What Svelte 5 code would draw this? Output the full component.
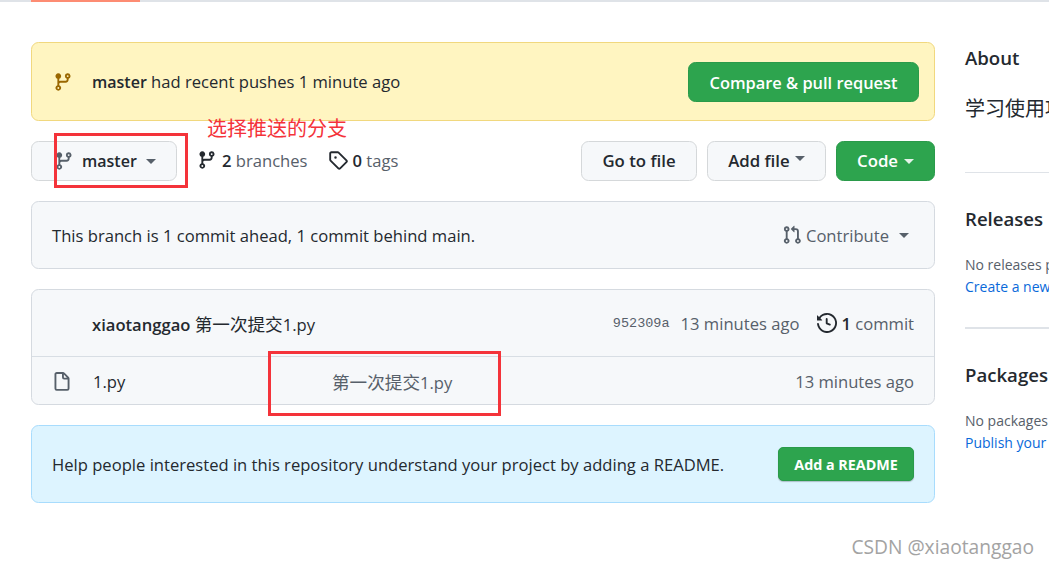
<script>
  const branchIcon = 'M11.75 2.5a.75.75 0 100 1.5.75.75 0 000-1.5zm-2.25.75a2.25 2.25 0 113 2.122V6A2.5 2.5 0 0110 8.5H6a1 1 0 00-1 1v1.128a2.251 2.251 0 11-1.5 0V5.372a2.25 2.25 0 111.5 0v1.836A2.492 2.492 0 016 7h4a1 1 0 001-1v-.628A2.25 2.25 0 019.5 3.25zM4.25 12a.75.75 0 100 1.5.75.75 0 000-1.5zM3.5 3.25a.75.75 0 111.5 0 .75.75 0 01-1.5 0z';
  const tagIcon = 'M2.5 7.775V2.75a.25.25 0 01.25-.25h5.025a.25.25 0 01.177.073l6.25 6.25a.25.25 0 010 .354l-5.025 5.025a.25.25 0 01-.354 0l-6.25-6.25a.25.25 0 01-.073-.177zm-1.5 0V2.75C1 1.784 1.784 1 2.75 1h5.025c.464 0 .91.184 1.238.513l6.25 6.25a1.75 1.75 0 010 2.474l-5.025 5.025a1.75 1.75 0 01-2.474 0l-6.25-6.25A1.75 1.75 0 011 7.775zM6 5a1 1 0 100 2 1 1 0 000-2z';
  const prIcon = 'M7.177 3.073L9.573.677A.25.25 0 0110 .854v4.792a.25.25 0 01-.427.177L7.177 3.427a.25.25 0 010-.354zM3.75 2.5a.75.75 0 100 1.5.75.75 0 000-1.5zm-2.25.75a2.25 2.25 0 113 2.122v5.256a2.251 2.251 0 11-1.5 0V5.372A2.25 2.25 0 011.5 3.25zM11 2.5h-1V4h1a1 1 0 011 1v5.628a2.251 2.251 0 101.5 0V5A2.5 2.5 0 0011 2.5zm1 10.25a.75.75 0 111.5 0 .75.75 0 01-1.5 0zM3.75 12a.75.75 0 100 1.5.75.75 0 000-1.5z';
  const historyIcon = 'M1.643 3.143L.427 1.927A.25.25 0 000 2.104V5.75c0 .138.112.25.25.25h3.646a.25.25 0 00.177-.427L2.715 4.215a6.5 6.5 0 11-1.18 4.458.75.75 0 10-1.493.154 8.001 8.001 0 101.6-5.684zM7.75 4a.75.75 0 01.75.75v2.992l2.028.812a.75.75 0 01-.557 1.392l-2.5-1A.75.75 0 017 8.25v-3.5A.75.75 0 017.75 4z';
  const fileIcon = 'M3.75 1.5a.25.25 0 00-.25.25v11.5c0 .138.112.25.25.25h8.5a.25.25 0 00.25-.25V6H9.75A1.75 1.75 0 018 4.25V1.5H3.75zm5.75.56v2.19c0 .138.112.25.25.25h2.19L9.5 2.06zM2 1.75C2 .784 2.784 0 3.75 0h5.086c.464 0 .909.184 1.237.513l3.414 3.414c.329.328.513.773.513 1.237v8.086A1.75 1.75 0 0112.25 15h-8.5A1.75 1.75 0 012 13.25V1.75z';
</script>

<div class="page">
  <div class="tabline"><span class="tab-active"></span></div>

  <div class="layout">
    <main class="main">
      <section class="banner">
        <div class="banner-text">
          <svg class="icon branch-yellow" viewBox="0 0 16 16"><path d={branchIcon} /></svg>
          <span><strong class="pushed">master</strong> had recent pushes 1 minute ago</span>
        </div>
        <button class="btn green compare">Compare &amp; pull request</button>
      </section>

      <section class="toolbar">
        <button class="btn branch-btn">
          <svg class="icon" viewBox="0 0 16 16"><path d={branchIcon} /></svg>
          <span class="branch-name">master</span>
          <i class="caret"></i>
        </button>
        <span class="meta">
          <svg class="icon dark" viewBox="0 0 16 16"><path d={branchIcon} /></svg>
          <span><strong>2</strong> branches</span>
        </span>
        <span class="meta">
          <svg class="icon dark" viewBox="0 0 16 16"><path fill-rule="evenodd" d={tagIcon} /></svg>
          <span><strong>0</strong> tags</span>
        </span>
        <span class="spacer"></span>
        <button class="btn goto">Go to file</button>
        <button class="btn addfile">Add file<i class="caret up"></i></button>
        <button class="btn green code">Code<i class="caret light"></i></button>
      </section>

      <section class="box ahead">
        <span>This branch is 1 commit ahead, 1 commit behind main.</span>
        <span class="contribute">
          <svg class="icon" viewBox="0 0 16 16"><path d={prIcon} /></svg>
          Contribute
          <i class="caret"></i>
        </span>
      </section>

      <section class="box files">
        <div class="commit-row">
          <span class="commit-msg"><strong>xiaotanggao</strong> <span class="cjk">第一次提交</span>1.py</span>
          <span class="spacer"></span>
          <code class="sha">952309a</code>
          <span class="muted">13 minutes ago</span>
          <span class="commits">
            <svg class="icon dark" viewBox="0 0 16 16"><path d={historyIcon} /></svg>
            <span><strong>1</strong> <span class="muted">commit</span></span>
          </span>
        </div>
        <div class="file-row">
          <svg class="icon file" viewBox="0 0 16 16"><path d={fileIcon} /></svg>
          <span class="file-name">1.py</span>
          <span class="muted file-msg"><span class="cjk">第一次提交</span>1.py</span>
          <span class="muted file-when">13 minutes ago</span>
        </div>
      </section>

      <section class="readme">
        <span>Help people interested in this repository understand your project by adding a README.</span>
        <button class="btn green add-readme">Add a README</button>
      </section>
    </main>

    <aside class="side">
      <h2 class="about">About</h2>
      <p class="desc">学习使用项目</p>
      <hr />
      <h2>Releases</h2>
      <p class="small muted">No releases published</p>
      <p class="small link">Create a new release</p>
      <hr />
      <h2>Packages</h2>
      <p class="small muted">No packages published</p>
      <p class="small link">Publish your first package</p>
    </aside>
  </div>

  <div class="mark mark-branch"></div>
  <div class="mark mark-msg"></div>
  <div class="note">选择推送的分支</div>
  <div class="watermark">CSDN @xiaotanggao</div>
</div>

<style>
  :global(body) {
    margin: 0;
    background: #fff;
    overflow: hidden;
  }

  .page {
    position: relative;
    width: 1049px;
    height: 568px;
    overflow: hidden;
    color: #24292f;
    font-family: "Open Sans", "Noto Sans CJK SC", sans-serif;
    font-size: 16.6px;
  }

  strong {
    font-weight: 600;
  }

  .cjk {
    font-size: 17.6px;
  }

  .tabline {
    height: 2px;
    background: #dfe3e8;
    padding-left: 31px;
  }

  .tab-active {
    display: block;
    width: 109px;
    height: 2px;
    background: #fd8c73;
  }

  .layout {
    display: flex;
    gap: 30px;
    padding: 40px 0 0 31px;
    width: 1200px;
  }

  .main {
    width: 904px;
    flex: none;
  }

  .icon {
    width: 20px;
    height: 20px;
    fill: #57606a;
    flex: none;
  }

  .icon.dark {
    fill: #24292f;
  }

  .branch-yellow {
    fill: #9a6700;
  }

  .btn {
    display: inline-flex;
    align-items: center;
    justify-content: center;
    height: 40px;
    box-sizing: border-box;
    border: 1px solid #d5d8da;
    border-radius: 7.5px;
    background: #f6f8fa;
    color: #24292f;
    font: 600 16.8px "Open Sans", sans-serif;
    padding: 0;
  }

  .btn.green {
    background: #2da44e;
    border-color: #2a9a4a;
    color: #fff;
  }

  .caret {
    display: inline-block;
    width: 0;
    height: 0;
    border: 5px solid transparent;
    border-top-color: #57606a;
    border-bottom: 0;
  }

  .caret.light {
    border-top-color: #e6f3ea;
    margin: 2px 0 0 6px;
  }

  .caret.up {
    margin: 0 0 4px 5px;
  }

  .banner {
    display: flex;
    align-items: center;
    justify-content: space-between;
    box-sizing: border-box;
    height: 79px;
    padding: 0 15px 0 21px;
    background: #fff5c1;
    border: 1px solid #f1d87e;
    border-radius: 7.5px;
  }

  .banner-text {
    display: flex;
    align-items: center;
    gap: 19px;
  }

  .pushed {
    font-size: 16px;
  }

  .compare {
    width: 231px;
    font-size: 16.4px;
    padding-top: 2px;
  }

  .toolbar {
    display: flex;
    align-items: center;
    margin-top: 20px;
    height: 40px;
  }

  .spacer {
    flex: 1;
  }

  .branch-btn {
    width: 146px;
    justify-content: flex-start;
    padding-left: 22px;
    font-size: 16px;
  }

  .branch-name {
    margin-left: 8px;
    margin-right: 9px;
  }

  .meta {
    display: inline-flex;
    align-items: center;
    gap: 5px;
    color: #57606a;
    margin-left: 20px;
    padding-bottom: 2px;
  }

  .meta strong {
    color: #24292f;
  }

  .goto {
    width: 116px;
    margin-right: 10px;
    padding-bottom: 2px;
  }

  .addfile {
    width: 119px;
    margin-right: 10px;
    padding-bottom: 2px;
  }

  .code {
    width: 99px;
    padding-bottom: 2px;
  }

  .box {
    border: 1px solid #d5dae0;
    border-radius: 7.5px;
    background: #f6f8fa;
    box-sizing: border-box;
  }

  .ahead {
    display: flex;
    align-items: center;
    justify-content: space-between;
    height: 68px;
    margin-top: 20px;
    padding: 0 25px 0 20px;
  }

  .contribute {
    display: inline-flex;
    align-items: center;
    gap: 4px;
    color: #57606a;
  }

  .contribute .caret {
    margin-left: 6px;
  }

  .files {
    height: 116px;
    margin-top: 20px;
  }

  .commit-row {
    display: flex;
    align-items: center;
    height: 66px;
    padding: 0 20px 0 60px;
    border-bottom: 1px solid #d8dee4;
  }

  .muted {
    color: #57606a;
  }

  .sha {
    font: 13.5px "Liberation Mono", "DejaVu Sans Mono", monospace;
    color: #57606a;
    margin-right: 11px;
  }

  .commits {
    display: inline-flex;
    align-items: center;
    gap: 4px;
    margin-left: 18px;
  }

  .file-row {
    display: flex;
    align-items: center;
    box-sizing: border-box;
    height: 47px;
    padding: 2px 20px 0;
  }

  .file-name {
    margin-left: 21px;
    width: 239px;
  }

  .file-when {
    margin-left: auto;
  }

  .readme {
    display: flex;
    align-items: center;
    justify-content: space-between;
    box-sizing: border-box;
    height: 78px;
    margin-top: 20px;
    padding: 0 20px;
    background: #ddf4ff;
    border: 1px solid #a8dcfd;
    border-radius: 7.5px;
  }

  .add-readme {
    width: 136px;
    height: 34px;
    font-size: 14.3px;
    font-weight: 700;
    border-radius: 5px;
    box-shadow: 0 1px 1px rgba(27, 31, 36, 0.25);
  }

  .side {
    width: 300px;
    flex: none;
  }

  .side h2 {
    margin: 0;
    font-size: 18.6px;
    font-weight: 600;
    line-height: 26px;
  }

  .about {
    margin-top: 3px !important;
  }

  .desc {
    margin: 25px 0 0;
    font-size: 20px;
    line-height: 26px;
    white-space: nowrap;
  }

  .side hr {
    border: 0;
    border-top: 2px solid #dfe3e8;
    margin: 0;
  }

  .side hr:nth-of-type(1) {
    margin: 50px 0 33px;
    border-top-width: 1px;
  }

  .side hr:nth-of-type(2) {
    margin: 29px 0 33px;
  }

  .small {
    margin: 0;
    font-size: 14px;
    line-height: 22px;
    white-space: nowrap;
  }

  .side h2 + .small {
    margin-top: 22px;
  }

  .link {
    color: #0969da;
  }

  .mark {
    position: absolute;
    box-sizing: border-box;
    border: 3px solid #f4333a;
    pointer-events: none;
  }

  .mark-branch {
    left: 54px;
    top: 133px;
    width: 134px;
    height: 55px;
  }

  .mark-msg {
    left: 268px;
    top: 351px;
    width: 233px;
    height: 65px;
  }

  .note {
    position: absolute;
    left: 207px;
    top: 114px;
    font-size: 20px;
    line-height: 28px;
    color: #f4333a;
    font-family: "Noto Sans CJK SC", sans-serif;
  }

  .watermark {
    position: absolute;
    right: 15px;
    top: 534px;
    font-size: 19.2px;
    line-height: 26px;
    color: #a3a3a3;
  }
</style>
